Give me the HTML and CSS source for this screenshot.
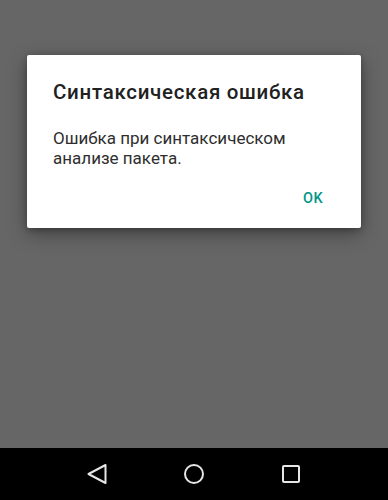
FILE: index.html
```html
<!DOCTYPE html>
<html lang="ru">
<head>
<meta charset="UTF-8" />
<meta name="viewport" content="width=device-width, initial-scale=1" />
<title>Синтаксическая ошибка</title>
<link rel="stylesheet" href="styles.css">
</head>
<body>

<div class="screen">
  <div class="dialog">
    <h2 class="dialog-title">Синтаксическая ошибка</h2>
    <p class="dialog-text">Ошибка при синтаксическом анализе пакета.</p>
    <div class="dialog-actions">
      <button class="ok-btn">OK</button>
    </div>
  </div>
</div>

<nav class="nav-bar">
  <svg class="nav-icon" viewBox="0 0 24 24">
    <path d="M20.5 3 L3.5 12 L20.5 21 Z" />
  </svg>
  <svg class="nav-icon" viewBox="0 0 24 24">
    <circle cx="12" cy="12" r="9" />
  </svg>
  <svg class="nav-icon" viewBox="0 0 24 24">
    <rect x="4" y="4" width="16" height="16" rx="1" />
  </svg>
</nav>

</body>
</html>
```

FILE: styles.css
```css
/* Roboto everywhere, like the phone */
body {
  font-family: Roboto, "Noto Sans", sans-serif;
  margin: 0;
  background: #666666;
  height: 500px;
  display: flex;
  flex-direction: column;
  overflow: hidden;
}

.screen {
  flex: 1;
  padding: 55px 27px 0;
}

.dialog {
  background: #ffffff;
  border-radius: 2px;
  box-shadow: 0 6px 20px rgba(0, 0, 0, 0.35), 0 2px 6px rgba(0, 0, 0, 0.25);
}

.dialog-title {
  margin: 0;
  padding: 25px 24px 0 26px;
  font-size: 20.5px;
  line-height: 24px;
  font-weight: 500;
  letter-spacing: 0.7px;
  color: #212121;
}

.dialog-text {
  margin: 0;
  padding: 24px 24px 0 26px;
  font-size: 17px;
  line-height: 20px;
  color: #2e2e2e;
}

.dialog-actions {
  display: flex;
  justify-content: flex-end;
  padding: 13px 8px 11px;
}

.ok-btn {
  background: none;
  border: none;
  font-family: inherit;
  font-size: 14.5px;
  font-weight: 500;
  letter-spacing: 0.5px;
  color: #009688;
  height: 36px;
  line-height: 36px;
  min-width: 64px;
  margin-right: 8px;
  padding: 0 8px;
  cursor: pointer;
}

.nav-bar {
  height: 52px;
  background: #000000;
  display: flex;
  align-items: center;
  justify-content: center;
  gap: 73px;
}

.nav-icon {
  width: 24px;
  height: 24px;
  fill: none;
  stroke: #e6e6e6;
  stroke-width: 2;
  stroke-linejoin: round;
}
```
